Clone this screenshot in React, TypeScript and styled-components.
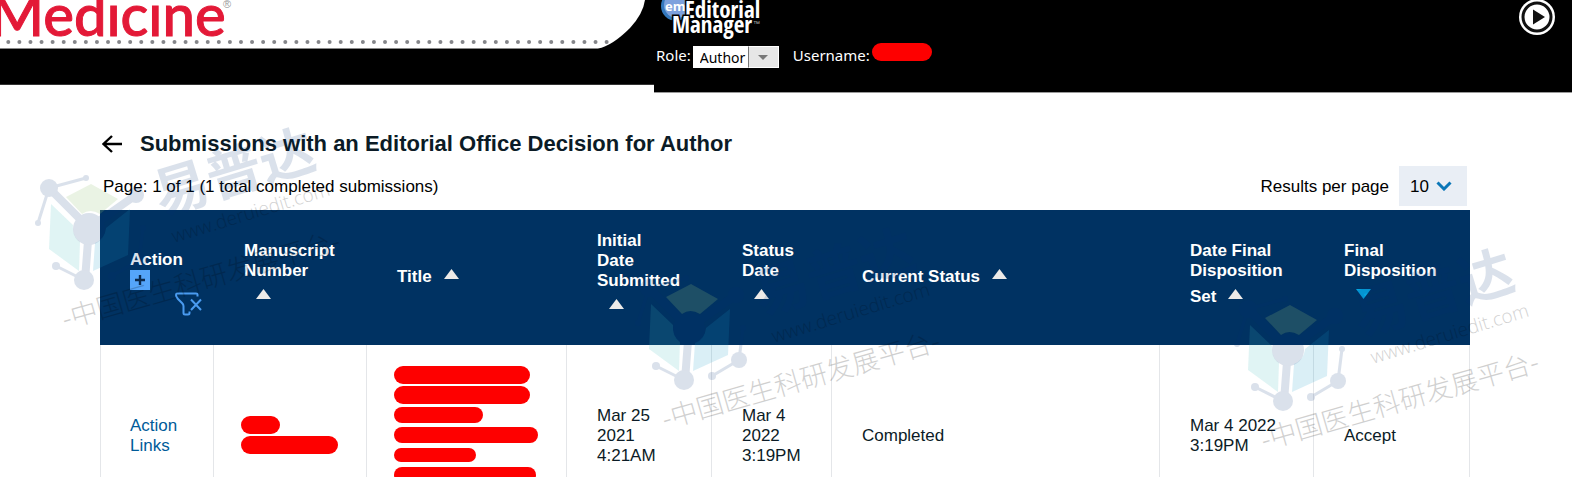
import React from 'react';
import styled, { createGlobalStyle } from 'styled-components';

const Global = createGlobalStyle`
  * { box-sizing: border-box; }
  html, body { margin: 0; background: #fff; }
  body { font-family: 'Liberation Sans', Arial, sans-serif; font-size: 17px; line-height: 20px; color: #0b1b26; }
`;

const Page = styled.div`
  position: relative;
  height: 100vh;
  overflow: hidden;
`;

const Banner = styled.header`
  display: flex;
  align-items: flex-start;
`;

const BrandSide = styled.div`
  flex: none;
  background: #000;
`;

const Art = styled.svg`
  display: block;
`;

const ToolSide = styled.div`
  flex: 1;
  display: flex;
  justify-content: space-between;
  align-items: flex-start;
  height: 93px;
  background: #000;
  border-bottom: 1px solid #999;
  padding: 0 17px 0 2px;
`;

const UserBar = styled.div`
  display: flex;
  align-items: flex-start;
  gap: 14px;
  font: 15px/20px 'Noto Sans', sans-serif;
  color: #fff;
`;

const RoleField = styled.label`
  display: flex;
  align-items: flex-start;
  gap: 2px;
`;

const UserField = styled.div`
  display: flex;
  align-items: flex-start;
  gap: 2px;
`;

const FieldName = styled.span`
  padding-top: 2px;
`;

const RoleBox = styled.span`
  display: flex;
  width: 86px;
  height: 22px;
  margin-top: 3px;
  background: #fff;
`;

const RoleSelect = styled.select`
  appearance: none;
  flex: 1;
  min-width: 0;
  border: 0;
  border-radius: 0;
  margin: 0;
  padding: 1px 0 0 7px;
  background: #fff;
  color: #000;
  font: 14px/20px 'Noto Sans', sans-serif;
`;

const RoleArrow = styled.span`
  display: grid;
  place-items: center;
  width: 31px;
  border: 1px solid #fff;
  border-left-color: #777;
  background: #e6e6e6;
`;

const Redaction = styled.span<{ $w: number; $h: number }>`
  display: block;
  flex: none;
  width: ${p => p.$w}px;
  height: ${p => p.$h}px;
  border-radius: 9px;
  background: #fe0000;
`;

const IconButton = styled.button`
  display: block;
  border: 0;
  padding: 0;
  background: none;
  line-height: 0;
`;

const Main = styled.main`
  padding: 38px 102px 0 100px;
`;

const TitleRow = styled.div`
  display: flex;
  align-items: center;
  gap: 18px;
  padding-left: 2px;
`;

const BackLink = styled.a`
  color: #000;
  line-height: 0;
`;

const Heading = styled.h1`
  margin: 0;
  font-size: 22px;
  line-height: 26px;
`;

const PagerRow = styled.div`
  display: flex;
  justify-content: space-between;
  align-items: center;
  height: 40px;
  margin: 9px 3px 4px;
  color: #000;
`;

const PagerText = styled.span`
  padding-top: 2px;
`;

const PerPage = styled.label`
  display: flex;
  align-items: center;
  gap: 10px;
`;

const PerPageBox = styled.span`
  display: flex;
  align-items: center;
  width: 68px;
  height: 40px;
  padding-right: 15px;
  background: #e9eef5;
`;

const PerPageSelect = styled.select`
  appearance: none;
  flex: 1;
  min-width: 0;
  height: 40px;
  border: 0;
  margin: 0;
  padding: 2px 0 0 11px;
  background: transparent;
  color: #000;
  font: inherit;
`;

const Grid = styled.table`
  width: 100%;
  table-layout: fixed;
  border-collapse: separate;
  border-spacing: 0;
`;

const Col = styled.col<{ $w?: number }>`
  width: ${p => (p.$w ? `${p.$w}px` : 'auto')};
`;

const HeadCell = styled.th<{ $top?: boolean }>`
  height: 135px;
  padding: ${p => (p.$top ? '40px 0 0 30px' : '2px 0 0 30px')};
  background: #003262;
  color: #fff;
  text-align: left;
  vertical-align: ${p => (p.$top ? 'top' : 'middle')};
`;

const Line = styled.span`
  display: block;
`;

const SortLine = styled.span`
  display: flex;
  align-items: flex-start;
  height: 35px;
  padding-top: 6px;
`;

const SortButton = styled(IconButton)`
  margin: 2px 0 0 12px;
`;

const ActionTools = styled.span`
  display: flex;
  align-items: flex-start;
  gap: 25px;
`;

const FilterButton = styled(IconButton)`
  margin-top: 22px;
`;

const Cell = styled.td`
  padding: 22px 0 20px 30px;
  border: solid #e4e6e9;
  border-width: 0 1px 1px 0;
  vertical-align: middle;

  &:first-child {
    border-left-width: 1px;
    padding-left: 29px;
  }
`;

const HiddenCell = styled(Cell)`
  padding: 20px 0 20px 27px;
`;

const HiddenLine = styled.span`
  display: flex;
  align-items: center;
  height: 20px;
`;

const ActionLink = styled.a`
  color: #005b99;
  text-decoration: none;
`;

const WatermarkLayer = styled.svg`
  position: absolute;
  top: 0;
  left: 0;
  pointer-events: none;
`;

const Brand = () => (
  <Art width="654" height="85" viewBox="0 0 654 85" role="img" aria-label="Medicine">
    <path d="M0 0H645Q643 14 630 28Q612 46 598 48.500H0Z" fill="#fff" />
    <path d="M0 48.500H598" stroke="#888" />
    <text
      x="-10"
      y="36"
      fill="#e31937"
      stroke="#e31937"
      strokeWidth="1"
      fontFamily="Lato, sans-serif"
      fontWeight="500"
      fontSize="58"
    >
      Medicine
    </text>
    <rect x="109" y="0" width="13" height="5" fill="#fff" />
    <rect x="150" y="0" width="15" height="5" fill="#fff" />
    <text x="223" y="8" fill="#999" fontFamily="Liberation Sans, sans-serif" fontSize="11">®</text>
    <path d="M8.300 42H608" stroke="#85868a" strokeWidth="4" strokeLinecap="round" strokeDasharray="0 11.080" />
    <path d="M0 84.500H654" stroke="#333" />
  </Art>
);

const EditorialManager = () => (
  <Art width="112" height="43" viewBox="0 0 112 43" role="img" aria-label="Editorial Manager">
    <circle cx="20" cy="6" r="15" fill="#3378bd" />
    <circle cx="21" cy="5" r="13" fill="#7da1dd" />
    <text x="9" y="11" fill="#fff" fontFamily="Open Sans, sans-serif" fontWeight="700" fontSize="13">em</text>
    <g
      fill="#fff"
      stroke="#000"
      strokeWidth="3"
      paintOrder="stroke"
      fontFamily="Open Sans Condensed, Open Sans, sans-serif"
      fontWeight="700"
      fontSize="23"
    >
      <text x="29" y="18">Editorial</text>
      <text x="16" y="33">Manager</text>
    </g>
    <text x="97" y="26" fill="#bbb" fontFamily="Liberation Sans, sans-serif" fontSize="7">™</text>
  </Art>
);

const PlayIcon = () => (
  <Art width="36" height="35" viewBox="0 1 36 35" aria-hidden="true">
    <circle cx="18" cy="18" r="18" fill="#fff" />
    <circle cx="18" cy="18" r="14" fill="#fff" stroke="#111" strokeWidth="3" />
    <path d="M14 10.500V25.500L26 18Z" fill="#111" />
  </Art>
);

const SortIcon = ({ down }: { down?: boolean }) => (
  <Art width="15" height="10" viewBox="0 0 15 10" aria-hidden="true">
    <path d={down ? 'M0 0H15L7.500 10Z' : 'M0 10H15L7.500 0Z'} fill={down ? '#05a5e1' : '#eceae8'} />
  </Art>
);

const PlusIcon = () => (
  <Art width="20" height="20" viewBox="0 0 20 20" aria-hidden="true">
    <rect width="20" height="20" fill="#55a5fa" />
    <path d="M10 5V15M5 10H15" stroke="#0b2a4e" strokeWidth="2.400" />
  </Art>
);

const ClearFilterIcon = () => (
  <Art width="28" height="24" viewBox="0 0 28 24" fill="none" stroke="#4a9bf0" strokeWidth="2" aria-hidden="true">
    <path d="M22.500 4.500V2.500Q22.500 1.500 21 1.500H2Q1 1.500 1 3Q1 5 3 7L7 11Q8.500 12.500 8.500 14V21Q8.500 22.500 10 22.500H13Q14.500 22.500 14.500 21V19.500" />
    <path d="M16 7.500L26 18M26 7.500L16 18" />
  </Art>
);

const Watermark = ({ x, y }: { x: number; y: number }) => (
  <g transform={`translate(${x} ${y})`}>
    <path d="M66 197L91 184L118 199L100 214Q90 208 82 214Z" fill="#96c378" opacity="0.2" />
    <path d="M51 204L73 225Q72 236 80 242L79 271L49 249Z" fill="#3cbaba" opacity="0.16" />
    <path d="M130 209L128 255L93 271L95 243Q105 239 106 228Z" fill="#1a9bc6" opacity="0.16" />
    <g fill="#003075" stroke="#003075" opacity="0.14">
      <g fill="none" strokeWidth="3">
        <path d="M49 188L86 178M49 188L38 223M84 280L56 266M139 260L112 276M139 260L143 228" />
        <path d="M49 188L89 228L136 195M89 228L85 280" strokeWidth="8" />
      </g>
      <g stroke="none">
        <circle cx="49" cy="188" r="9" />
        <circle cx="86" cy="178" r="3" />
        <circle cx="38" cy="223" r="3" />
        <circle cx="136" cy="195" r="8" />
        <circle cx="89" cy="229" r="16" />
        <circle cx="84" cy="280" r="10" />
        <circle cx="56" cy="266" r="4" />
        <circle cx="139" cy="260" r="8" />
        <circle cx="112" cy="276" r="4" />
        <circle cx="143" cy="228" r="3" />
      </g>
    </g>
    <text
      transform="translate(161 215) rotate(-17)"
      fill="#003075"
      opacity="0.14"
      fontFamily="Noto Sans CJK SC, sans-serif"
      fontWeight="700"
      fontSize="55"
    >
      易普达
    </text>
    <text
      transform="translate(174 243) rotate(-17)"
      fill="#000"
      opacity="0.18"
      fontFamily="Open Sans, sans-serif"
      fontWeight="300"
      fontSize="19"
    >
      www.deruiedit.com
    </text>
    <text
      transform="translate(65 329) rotate(-16)"
      fill="#000"
      opacity="0.18"
      fontFamily="Noto Sans CJK SC, sans-serif"
      fontWeight="300"
      fontSize="27"
    >
      -中国医生科研发展平台-
    </text>
  </g>
);

type Column = { name: string; width?: number; lines: string[]; last?: string; down?: boolean };

const columns: Column[] = [
  { name: 'Manuscript Number', width: 153, lines: ['Manuscript', 'Number'] },
  { name: 'Title', width: 200, lines: [], last: 'Title' },
  { name: 'Initial Date Submitted', width: 145, lines: ['Initial', 'Date', 'Submitted'] },
  { name: 'Status Date', width: 120, lines: ['Status', 'Date'] },
  { name: 'Current Status', lines: [], last: 'Current Status' },
  { name: 'Date Final Disposition Set', width: 154, lines: ['Date Final', 'Disposition'], last: 'Set' },
  { name: 'Final Disposition', width: 156, lines: ['Final', 'Disposition'], down: true },
];

const Hidden = ({ bars }: { bars: [number, number][] }) => (
  <>
    {bars.map(([w, h], i) => (
      <HiddenLine key={i}>
        <Redaction $w={w} $h={h} />
      </HiddenLine>
    ))}
  </>
);

const Lines = ({ of }: { of: string[] }) => (
  <>
    {of.map(text => (
      <Line key={text}>{text}</Line>
    ))}
  </>
);

export default function App() {
  return (
    <Page>
      <Global />
      <Banner>
        <BrandSide>
          <Brand />
        </BrandSide>
        <ToolSide>
          <div>
            <EditorialManager />
            <UserBar>
              <RoleField>
                <FieldName>Role:</FieldName>
                <RoleBox>
                  <RoleSelect defaultValue="Author">
                    <option>Author</option>
                  </RoleSelect>
                  <RoleArrow>
                    <svg width="10" height="5" viewBox="0 0 10 5" aria-hidden="true">
                      <path d="M0 0H10L5 5Z" fill="#777" />
                    </svg>
                  </RoleArrow>
                </RoleBox>
              </RoleField>
              <UserField>
                <FieldName>Username:</FieldName>
                <Redaction $w={60} $h={18} />
              </UserField>
            </UserBar>
          </div>
          <IconButton aria-label="Play">
            <PlayIcon />
          </IconButton>
        </ToolSide>
      </Banner>

      <Main>
        <TitleRow>
          <BackLink href="#" aria-label="Back">
            <Art width="20" height="18" viewBox="0 0 20 18" fill="none" stroke="#000" strokeWidth="2.400" aria-hidden="true">
              <path d="M20 9H1.500M10 1L1.500 9L10 17" />
            </Art>
          </BackLink>
          <Heading>Submissions with an Editorial Office Decision for Author</Heading>
        </TitleRow>
        <PagerRow>
          <PagerText>Page: 1 of 1 (1 total completed submissions)</PagerText>
          <PerPage>
            <PagerText>Results per page</PagerText>
            <PerPageBox>
              <PerPageSelect defaultValue="10">
                <option>10</option>
              </PerPageSelect>
              <svg width="16" height="10" viewBox="0 0 16 10" fill="none" stroke="#0b77b8" strokeWidth="3" aria-hidden="true">
                <path d="M1.500 1.500L8 8L14.500 1.500" />
              </svg>
            </PerPageBox>
          </PerPage>
        </PagerRow>

        <Grid>
          <colgroup>
            <Col $w={114} />
            {columns.map(c => (
              <Col key={c.name} $w={c.width} />
            ))}
          </colgroup>
          <thead>
            <tr>
              <HeadCell $top>
                <Line>Action</Line>
                <ActionTools>
                  <IconButton aria-label="Expand actions">
                    <PlusIcon />
                  </IconButton>
                  <FilterButton aria-label="Clear filters">
                    <ClearFilterIcon />
                  </FilterButton>
                </ActionTools>
              </HeadCell>
              {columns.map(c => (
                <HeadCell key={c.name}>
                  <Lines of={c.lines} />
                  <SortLine>
                    {c.last}
                    <SortButton aria-label={`Sort by ${c.name}`}>
                      <SortIcon down={c.down} />
                    </SortButton>
                  </SortLine>
                </HeadCell>
              ))}
            </tr>
          </thead>
          <tbody>
            <tr>
              <Cell>
                <ActionLink href="#">
                  <Lines of={['Action', 'Links']} />
                </ActionLink>
              </Cell>
              <HiddenCell>
                <Hidden bars={[[39, 18], [97, 18]]} />
              </HiddenCell>
              <HiddenCell>
                <Hidden bars={[[136, 18], [136, 18], [89, 16], [144, 16], [82, 14], [142, 16], [120, 16]]} />
              </HiddenCell>
              <Cell>
                <Lines of={['Mar 25', '2021', '4:21AM']} />
              </Cell>
              <Cell>
                <Lines of={['Mar 4', '2022', '3:19PM']} />
              </Cell>
              <Cell>Completed</Cell>
              <Cell>
                <Lines of={['Mar 4 2022', '3:19PM']} />
              </Cell>
              <Cell>Accept</Cell>
            </tr>
          </tbody>
        </Grid>
      </Main>

      <WatermarkLayer width="100%" height="100%" aria-hidden="true">
        <Watermark x={0} y={0} />
        <Watermark x={600} y={100} />
        <Watermark x={1199} y={121} />
      </WatermarkLayer>
    </Page>
  );
}
